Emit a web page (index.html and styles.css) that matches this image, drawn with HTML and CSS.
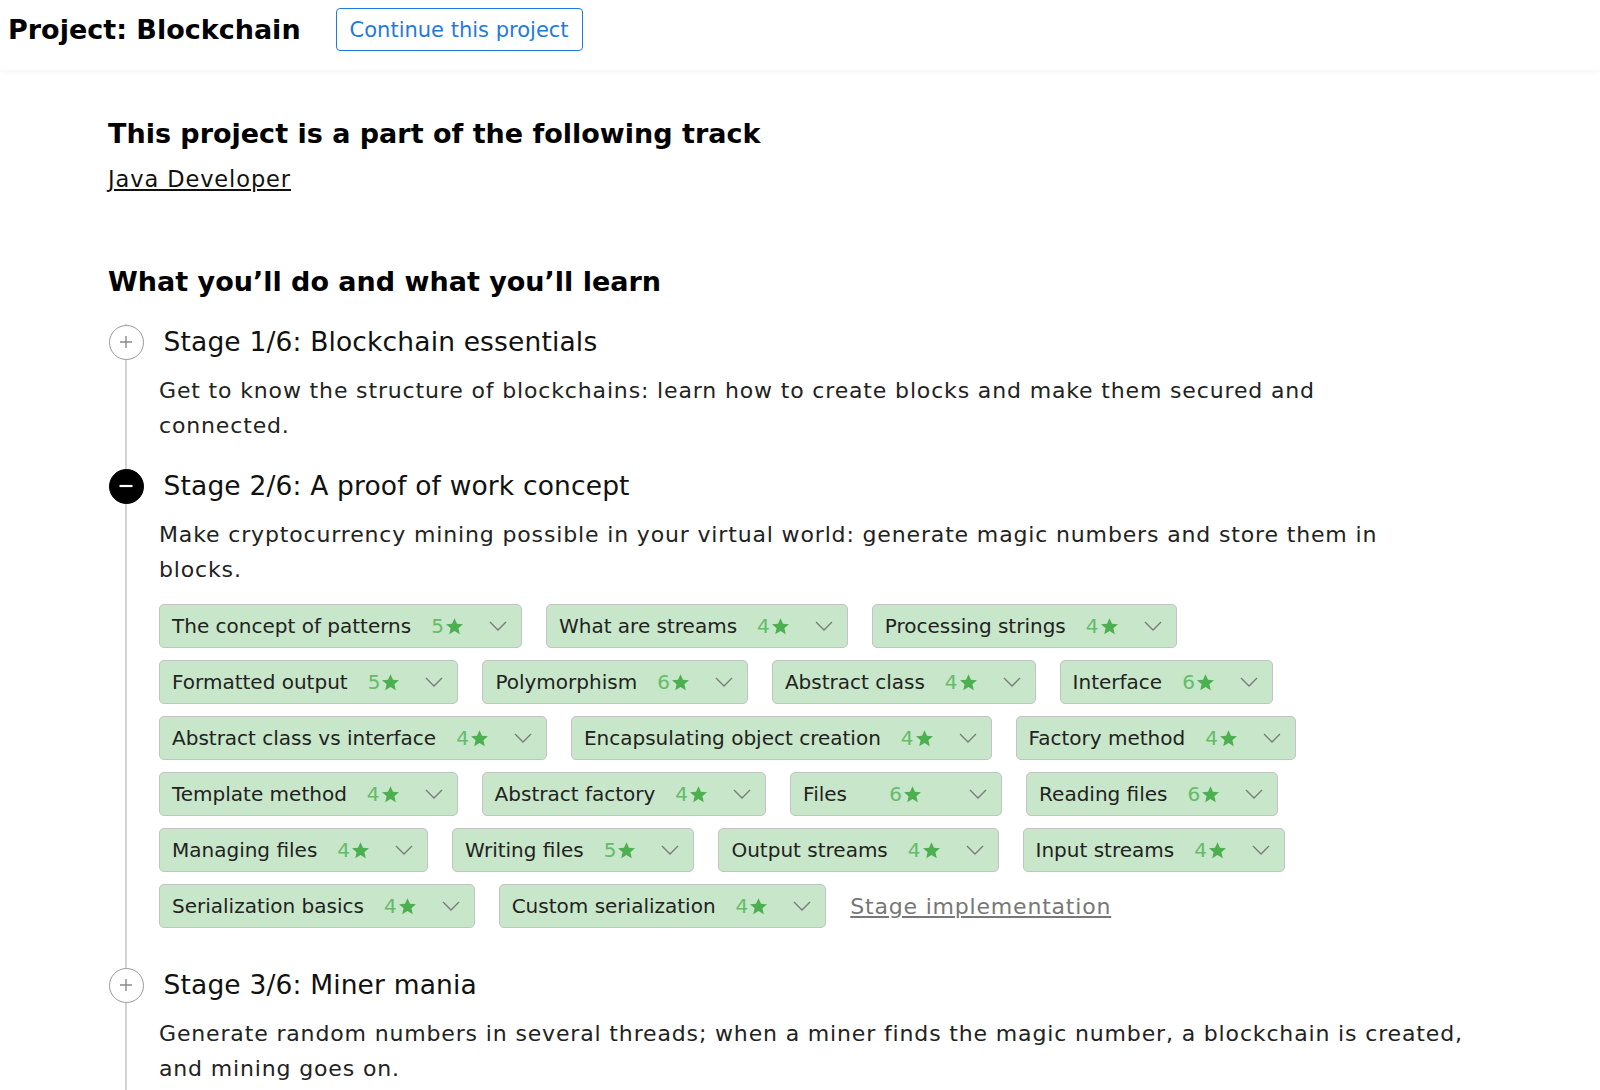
FILE: index.html
```html
<!DOCTYPE html>
<html lang="en">
<head>
    <meta charset="UTF-8">
    <meta name="viewport" content="width=device-width, initial-scale=1.0">
    <title>Project: Blockchain</title>
    <link rel="stylesheet" href="styles.css">
</head>
<body>
    <header class="top-bar">
        <h1 class="project-title">Project: Blockchain</h1>
        <button class="continue-btn" type="button">Continue this project</button>
    </header>

    <main class="content">
        <section class="track">
            <h2 class="section-title">This project is a part of the following track</h2>
            <a class="track-link" href="#">Java Developer</a>
        </section>

        <section class="learn">
            <h2 class="section-title">What you’ll do and what you’ll learn</h2>

            <div class="stages">
                <div class="stage">
                    <div class="stage-head">
                        <span class="toggle">
                            <svg width="14" height="14" viewBox="0 0 14 14"><path d="M7 1v12M1 7h12" stroke="#8a8a8a" stroke-width="1.4" fill="none"/></svg>
                        </span>
                        <h3 class="stage-title">Stage 1/6: Blockchain essentials</h3>
                    </div>
                    <p class="stage-desc">Get to know the structure of blockchains: learn how to create blocks and make them secured and<br>connected.</p>
                </div>

                <div class="stage">
                    <div class="stage-head">
                        <span class="toggle open">
                            <svg width="16" height="16" viewBox="0 0 16 16"><path d="M1.5 8h13" stroke="#fff" stroke-width="2.2" fill="none"/></svg>
                        </span>
                        <h3 class="stage-title">Stage 2/6: A proof of work concept</h3>
                    </div>
                    <p class="stage-desc">Make cryptocurrency mining possible in your virtual world: generate magic numbers and store them in<br>blocks.</p>

                    <div class="topics">
                        <div class="topic"><span class="topic-name">The concept of patterns</span><span class="rating">5<svg class="star" viewBox="0 0 24 24"><path d="M12 1.5l3.1 7.1 7.6.7-5.8 5 1.8 7.5L12 17.8l-6.7 4 1.8-7.5-5.8-5 7.6-.7z"/></svg></span><svg class="chevron" viewBox="0 0 18 10"><path d="M1 1l8 8 8-8"/></svg></div>
                        <div class="topic"><span class="topic-name">What are streams</span><span class="rating">4<svg class="star" viewBox="0 0 24 24"><path d="M12 1.5l3.1 7.1 7.6.7-5.8 5 1.8 7.5L12 17.8l-6.7 4 1.8-7.5-5.8-5 7.6-.7z"/></svg></span><svg class="chevron" viewBox="0 0 18 10"><path d="M1 1l8 8 8-8"/></svg></div>
                        <div class="topic"><span class="topic-name">Processing strings</span><span class="rating">4<svg class="star" viewBox="0 0 24 24"><path d="M12 1.5l3.1 7.1 7.6.7-5.8 5 1.8 7.5L12 17.8l-6.7 4 1.8-7.5-5.8-5 7.6-.7z"/></svg></span><svg class="chevron" viewBox="0 0 18 10"><path d="M1 1l8 8 8-8"/></svg></div>
                        <div class="topic"><span class="topic-name">Formatted output</span><span class="rating">5<svg class="star" viewBox="0 0 24 24"><path d="M12 1.5l3.1 7.1 7.6.7-5.8 5 1.8 7.5L12 17.8l-6.7 4 1.8-7.5-5.8-5 7.6-.7z"/></svg></span><svg class="chevron" viewBox="0 0 18 10"><path d="M1 1l8 8 8-8"/></svg></div>
                        <div class="topic"><span class="topic-name">Polymorphism</span><span class="rating">6<svg class="star" viewBox="0 0 24 24"><path d="M12 1.5l3.1 7.1 7.6.7-5.8 5 1.8 7.5L12 17.8l-6.7 4 1.8-7.5-5.8-5 7.6-.7z"/></svg></span><svg class="chevron" viewBox="0 0 18 10"><path d="M1 1l8 8 8-8"/></svg></div>
                        <div class="topic"><span class="topic-name">Abstract class</span><span class="rating">4<svg class="star" viewBox="0 0 24 24"><path d="M12 1.5l3.1 7.1 7.6.7-5.8 5 1.8 7.5L12 17.8l-6.7 4 1.8-7.5-5.8-5 7.6-.7z"/></svg></span><svg class="chevron" viewBox="0 0 18 10"><path d="M1 1l8 8 8-8"/></svg></div>
                        <div class="topic"><span class="topic-name">Interface</span><span class="rating">6<svg class="star" viewBox="0 0 24 24"><path d="M12 1.5l3.1 7.1 7.6.7-5.8 5 1.8 7.5L12 17.8l-6.7 4 1.8-7.5-5.8-5 7.6-.7z"/></svg></span><svg class="chevron" viewBox="0 0 18 10"><path d="M1 1l8 8 8-8"/></svg></div>
                        <div class="topic"><span class="topic-name">Abstract class vs interface</span><span class="rating">4<svg class="star" viewBox="0 0 24 24"><path d="M12 1.5l3.1 7.1 7.6.7-5.8 5 1.8 7.5L12 17.8l-6.7 4 1.8-7.5-5.8-5 7.6-.7z"/></svg></span><svg class="chevron" viewBox="0 0 18 10"><path d="M1 1l8 8 8-8"/></svg></div>
                        <div class="topic"><span class="topic-name">Encapsulating object creation</span><span class="rating">4<svg class="star" viewBox="0 0 24 24"><path d="M12 1.5l3.1 7.1 7.6.7-5.8 5 1.8 7.5L12 17.8l-6.7 4 1.8-7.5-5.8-5 7.6-.7z"/></svg></span><svg class="chevron" viewBox="0 0 18 10"><path d="M1 1l8 8 8-8"/></svg></div>
                        <div class="topic"><span class="topic-name">Factory method</span><span class="rating">4<svg class="star" viewBox="0 0 24 24"><path d="M12 1.5l3.1 7.1 7.6.7-5.8 5 1.8 7.5L12 17.8l-6.7 4 1.8-7.5-5.8-5 7.6-.7z"/></svg></span><svg class="chevron" viewBox="0 0 18 10"><path d="M1 1l8 8 8-8"/></svg></div>
                        <div class="topic"><span class="topic-name">Template method</span><span class="rating">4<svg class="star" viewBox="0 0 24 24"><path d="M12 1.5l3.1 7.1 7.6.7-5.8 5 1.8 7.5L12 17.8l-6.7 4 1.8-7.5-5.8-5 7.6-.7z"/></svg></span><svg class="chevron" viewBox="0 0 18 10"><path d="M1 1l8 8 8-8"/></svg></div>
                        <div class="topic"><span class="topic-name">Abstract factory</span><span class="rating">4<svg class="star" viewBox="0 0 24 24"><path d="M12 1.5l3.1 7.1 7.6.7-5.8 5 1.8 7.5L12 17.8l-6.7 4 1.8-7.5-5.8-5 7.6-.7z"/></svg></span><svg class="chevron" viewBox="0 0 18 10"><path d="M1 1l8 8 8-8"/></svg></div>
                        <div class="topic"><span class="topic-name">Files</span><span class="rating">6<svg class="star" viewBox="0 0 24 24"><path d="M12 1.5l3.1 7.1 7.6.7-5.8 5 1.8 7.5L12 17.8l-6.7 4 1.8-7.5-5.8-5 7.6-.7z"/></svg></span><svg class="chevron" viewBox="0 0 18 10"><path d="M1 1l8 8 8-8"/></svg></div>
                        <div class="topic"><span class="topic-name">Reading files</span><span class="rating">6<svg class="star" viewBox="0 0 24 24"><path d="M12 1.5l3.1 7.1 7.6.7-5.8 5 1.8 7.5L12 17.8l-6.7 4 1.8-7.5-5.8-5 7.6-.7z"/></svg></span><svg class="chevron" viewBox="0 0 18 10"><path d="M1 1l8 8 8-8"/></svg></div>
                        <div class="topic"><span class="topic-name">Managing files</span><span class="rating">4<svg class="star" viewBox="0 0 24 24"><path d="M12 1.5l3.1 7.1 7.6.7-5.8 5 1.8 7.5L12 17.8l-6.7 4 1.8-7.5-5.8-5 7.6-.7z"/></svg></span><svg class="chevron" viewBox="0 0 18 10"><path d="M1 1l8 8 8-8"/></svg></div>
                        <div class="topic"><span class="topic-name">Writing files</span><span class="rating">5<svg class="star" viewBox="0 0 24 24"><path d="M12 1.5l3.1 7.1 7.6.7-5.8 5 1.8 7.5L12 17.8l-6.7 4 1.8-7.5-5.8-5 7.6-.7z"/></svg></span><svg class="chevron" viewBox="0 0 18 10"><path d="M1 1l8 8 8-8"/></svg></div>
                        <div class="topic"><span class="topic-name">Output streams</span><span class="rating">4<svg class="star" viewBox="0 0 24 24"><path d="M12 1.5l3.1 7.1 7.6.7-5.8 5 1.8 7.5L12 17.8l-6.7 4 1.8-7.5-5.8-5 7.6-.7z"/></svg></span><svg class="chevron" viewBox="0 0 18 10"><path d="M1 1l8 8 8-8"/></svg></div>
                        <div class="topic"><span class="topic-name">Input streams</span><span class="rating">4<svg class="star" viewBox="0 0 24 24"><path d="M12 1.5l3.1 7.1 7.6.7-5.8 5 1.8 7.5L12 17.8l-6.7 4 1.8-7.5-5.8-5 7.6-.7z"/></svg></span><svg class="chevron" viewBox="0 0 18 10"><path d="M1 1l8 8 8-8"/></svg></div>
                        <div class="topic"><span class="topic-name">Serialization basics</span><span class="rating">4<svg class="star" viewBox="0 0 24 24"><path d="M12 1.5l3.1 7.1 7.6.7-5.8 5 1.8 7.5L12 17.8l-6.7 4 1.8-7.5-5.8-5 7.6-.7z"/></svg></span><svg class="chevron" viewBox="0 0 18 10"><path d="M1 1l8 8 8-8"/></svg></div>
                        <div class="topic"><span class="topic-name">Custom serialization</span><span class="rating">4<svg class="star" viewBox="0 0 24 24"><path d="M12 1.5l3.1 7.1 7.6.7-5.8 5 1.8 7.5L12 17.8l-6.7 4 1.8-7.5-5.8-5 7.6-.7z"/></svg></span><svg class="chevron" viewBox="0 0 18 10"><path d="M1 1l8 8 8-8"/></svg></div>
                        <a class="impl-link" href="#">Stage implementation</a>
                    </div>
                </div>

                <div class="stage">
                    <div class="stage-head">
                        <span class="toggle">
                            <svg width="14" height="14" viewBox="0 0 14 14"><path d="M7 1v12M1 7h12" stroke="#8a8a8a" stroke-width="1.4" fill="none"/></svg>
                        </span>
                        <h3 class="stage-title">Stage 3/6: Miner mania</h3>
                    </div>
                    <p class="stage-desc">Generate random numbers in several threads; when a miner finds the magic number, a blockchain is created, and mining goes on.</p>
                </div>
            </div>
        </section>
    </main>
</body>
</html>
```

FILE: styles.css
```css
body {
    margin: 0;
    font-family: "DejaVu Sans", Verdana, sans-serif;
    color: #111;
    background-color: #fff;
}

.top-bar {
    display: flex;
    align-items: center;
    padding: 8px 8px 19px;
    box-shadow: 0 2px 6px rgba(0,0,0,0.04);
}

.project-title {
    margin: 0;
    font-size: 27px;
    font-weight: 700;
    color: #000;
}

.continue-btn {
    margin-left: 35px;
    height: 43px;
    padding: 0 13px;
    border: 1px solid #1f7ae0;
    border-radius: 4px;
    background-color: #fff;
    color: #1f7ae0;
    font-family: inherit;
    font-size: 21px;
    cursor: pointer;
}

.content {
    width: 1368px;
    padding-left: 108px;
}

.section-title {
    margin: 0;
    font-size: 27px;
    font-weight: 700;
    line-height: 34px;
    color: #000;
}

.track {
    padding-top: 47px;
}

.track-link {
    display: inline-block;
    margin-top: 13px;
    font-size: 22.5px;
    line-height: 30px;
    letter-spacing: 0.9px;
    color: #111;
}

.learn {
    margin-top: 71px;
}

.stages {
    margin-top: 25px;
    margin-left: 17px;
    border-left: 2px solid #d4d4d4;
    padding-bottom: 40px;
}

.stage {
    padding-bottom: 25px;
}

.stage-head {
    display: flex;
    align-items: center;
    gap: 20px;
    margin-left: -18.5px;
}

.toggle {
    display: flex;
    align-items: center;
    justify-content: center;
    width: 33px;
    height: 33px;
    border: 1px solid #9a9a9a;
    border-radius: 50%;
    background-color: #fff;
    flex-shrink: 0;
}

.toggle.open {
    background-color: #000;
    border-color: #000;
}

.stage-title {
    margin: 0;
    font-size: 26.5px;
    font-weight: 400;
    line-height: 36px;
    letter-spacing: 0.15px;
    color: #111;
}

.stage-desc {
    margin: 13px 0 0 32px;
    font-size: 22px;
    line-height: 35px;
    letter-spacing: 0.85px;
    color: #222;
}

.topics {
    display: flex;
    flex-wrap: wrap;
    align-items: center;
    gap: 12px 24px;
    margin: 17px 0 14px 32px;
}

.topic {
    display: flex;
    align-items: center;
    justify-content: space-between;
    min-width: 212px;
    height: 44px;
    box-sizing: border-box;
    padding: 0 14px 0 12px;
    background-color: #c8e6c9;
    border: 1.5px solid #c3c3c3;
    border-radius: 5px;
    font-size: 20px;
    color: #222;
}

.rating {
    display: flex;
    align-items: center;
    margin-left: 20px;
    color: #66bb6a;
}

.star {
    width: 19px;
    height: 19px;
    margin-left: 1px;
    fill: #4caf50;
}

.chevron {
    width: 18px;
    height: 10px;
    margin-left: 25px;
    fill: none;
    stroke: #7a7a7a;
    stroke-width: 1.3;
}

.impl-link {
    font-size: 22px;
    letter-spacing: 0.8px;
    color: #777;
}
```
